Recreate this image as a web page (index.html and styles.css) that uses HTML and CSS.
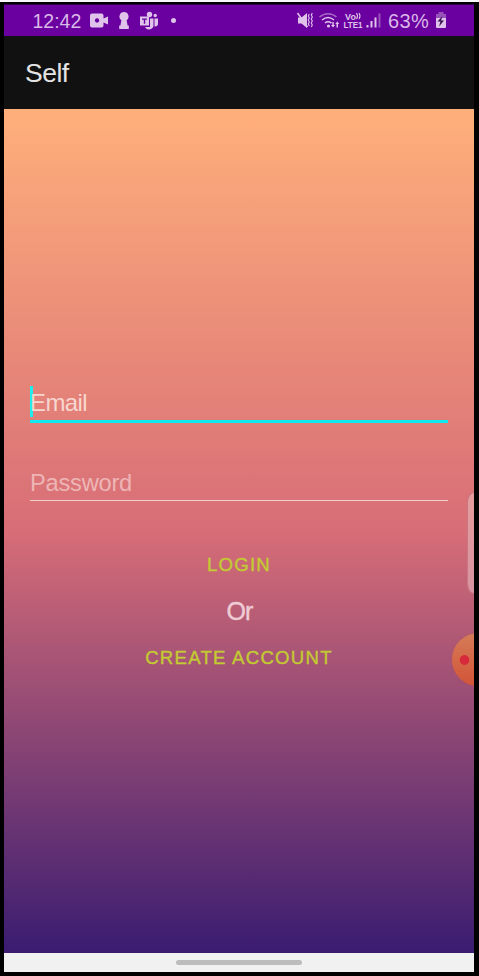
FILE: index.html
```html
<!DOCTYPE html>
<html lang="en">
<head>
<meta charset="utf-8">
<title>Self</title>
<link rel="stylesheet" href="styles.css">
</head>
<body>
<div class="device">
  <header class="status">
    <span class="time">12:42</span>
    <svg class="notifications" width="92" height="22" viewBox="88 9 92 22">
      <path fill-rule="evenodd" d="M92 13.500h9.500a2 2 0 0 1 2 2v3l4.500-2v8l-4.500-2v3a2 2 0 0 1-2 2H92a2 2 0 0 1-2-2v-10a2 2 0 0 1 2-2zM97 18.300a2.200 2.200 0 1 0 .1 0z"/>
      <path d="M124 12a4.500 4.500 0 0 1 2.600 8.200l1 5.300h1.200v3.500h-9.600v-3.500h1.200l1-5.300A4.500 4.500 0 0 1 124 12z"/>
      <circle cx="149.500" cy="14.500" r="2.700"/><circle cx="155.200" cy="15.500" r="1.700"/>
      <path d="M150 18.500h3.500v6a4.500 4.500 0 0 1-8.500 2.500h5zM154.500 18.500h3.500v6a3 3 0 0 1-3.500 2z"/>
      <path fill-rule="evenodd" d="M140 16.500h9v9h-9zM142 18.500v1.300h1.800v4h1.400v-4h1.800v-1.300z"/>
      <circle cx="173.500" cy="20.500" r="2.500"/>
    </svg>
    <svg class="signals" width="86" height="22" viewBox="296 9 86 22">
      <path d="M298 17.500h3.500l5.500-4.500v15l-5.500-4.500H298z"/>
      <path class="line" d="M297.500 13l10 14"/>
      <path class="line thin" d="M309.300 14l-1 2 1 2-1 2 1 2-1 2 1 2M312.300 13l-1 2 1 2-1 2 1 2-1 2 1 2-1 2"/>
      <path class="line dim" d="M319.500 17c5-4.500 12-4.500 17 0"/>
      <path class="line" d="M322 20c4-3.300 8-3.300 12 0M325 23c2-1.600 4-1.600 6.500 0"/>
      <circle cx="328.500" cy="26" r="1.600"/>
      <path d="M333 27.500l-2-2.500h1.300v-3h1.500v3h1.300zM337.300 21.500l2 2.500H338v3.500h-1.500V24h-1.300z"/>
      <text x="345" y="19.500" textLength="11">Vo</text>
      <path class="line thin" d="M356.500 13q2 3 0 6M359 13q2 3 0 6"/>
      <text x="343.500" y="28.300" textLength="19" lengthAdjust="spacingAndGlyphs">LTE1</text>
      <path d="M366.500 25h2v2.500h-2zM370.500 21h2v6.500h-2zM374.500 17.500h2v10h-2z"/>
      <path class="dim-fill" d="M378.500 13.500h2v14h-2z"/>
    </svg>
    <span class="percent">63%</span>
    <svg class="battery" width="12" height="18" viewBox="435 11 12 18">
      <path class="dim-fill" d="M438.500 12h5v2h2.500v4h-10v-4h2.500z"/>
      <path d="M436 18h10v9a1 1 0 0 1-1 1h-8a1 1 0 0 1-1-1z"/>
      <path class="bolt" d="M442.500 16l-5 5.500h3l-1.500 5 5-6h-3z"/>
    </svg>
  </header>
  <div class="appbar"><h1>Self</h1></div>
  <main class="screen">
    <label class="field focused"><span>Email</span></label>
    <label class="field"><span>Password</span></label>
    <button class="action login">LOGIN</button>
    <p class="or">Or</p>
    <button class="action">CREATE ACCOUNT</button>
    <div class="edge-handle"></div>
    <div class="recorder"></div>
  </main>
  <footer class="nav"><div class="pill"></div></footer>
</div>
</body>
</html>
```

FILE: styles.css
```css
* { box-sizing: border-box; }

body {
  margin: 0;
  height: 976px;
  overflow: hidden;
  background: #000;
  border-top: 2px solid #f8f8fa;
  font-family: "Liberation Sans", Arial, sans-serif;
}

.device {
  display: flex;
  flex-direction: column;
  width: 470px;
  height: 970px;
  margin: 2px 0 0 4px;
}

.status {
  display: flex;
  align-items: center;
  flex: none;
  height: 32px;
  padding-left: 28.5px;
  border-top: 1px solid #32004d;
  background: #6a009f;
  color: #d9b9e8;
}

.status svg { flex: none; fill: #dfc3eb; }
.time { width: 55.5px; padding-top: 1px; font-size: 19.5px; }
.notifications { margin-top: -1px; }
.signals { margin: -1px 0 0 116px; }
.percent { width: 46px; margin-left: 6px; padding-top: 1px; font-size: 20px; letter-spacing: 0.4px; }
.battery { margin: -1px 0 0 1px; }
.signals text { font-size: 9px; font-weight: bold; }
.signals .line { fill: none; stroke: #dfc3eb; stroke-width: 1.5; }
.signals .thin { stroke-width: 1.1; }
.signals .dim { stroke: #a668c4; }
.status .dim-fill { fill: #9853bb; }
.status .bolt { fill: #35104b; }

.appbar {
  display: flex;
  align-items: center;
  flex: none;
  height: 73px;
  padding: 2px 0 0 21px;
  background: #111;
}

.appbar h1 { margin: 0; color: #e4e4e4; font-size: 26.5px; font-weight: normal; letter-spacing: -0.5px; }

.screen {
  position: relative;
  display: flex;
  flex-direction: column;
  align-items: center;
  flex: none;
  height: 844px;
  padding-top: 277px;
  overflow: hidden;
  background: linear-gradient(#ffaf7b, #d76d77 50%, #3a1c71);
}

.field {
  width: 418px;
  height: 33px;
  margin-bottom: 45px;
  border-bottom: 1px solid #f0cfd0;
  color: #edb5b5;
  font-size: 23.7px;
  line-height: 30px;
  letter-spacing: -0.25px;
}

.field.focused {
  height: 37px;
  border-bottom: 3px solid #0eeaf0;
  color: #f7d6cf;
  font-size: 24px;
  line-height: 33px;
  letter-spacing: -0.6px;
}

.field.focused span {
  display: block;
  height: 31px;
  border-left: 3px solid #20edf0;
  text-indent: -3px;
}

.field + .field { margin-bottom: 51px; }

.action {
  padding: 0;
  border: 0;
  background: none;
  color: #c3ca32;
  font: 18.6px/26px "Liberation Sans", Arial, sans-serif;
  letter-spacing: 1.25px;
  -webkit-text-stroke: 0.4px #c3ca32;
}

.or {
  margin: 18px 0 19px 1px;
  color: #efccd5;
  font-size: 25px;
  line-height: 30px;
  letter-spacing: -0.9px;
  -webkit-text-stroke: 0.4px #efccd5;
}

.edge-handle {
  position: absolute;
  top: 383px;
  right: -7px;
  width: 14px;
  height: 102px;
  border: 1px solid #c77880;
  border-radius: 8px / 12px;
  background: linear-gradient(#e59c9c, #d893a2);
}

.recorder {
  position: absolute;
  top: 524px;
  right: -31px;
  width: 53px;
  height: 53px;
  border-radius: 50%;
  background: radial-gradient(circle at 12.5px 27px, #d72b3b 4.5px, transparent 5.2px), linear-gradient(#d57c58, #d35437);
  box-shadow: 0 0 2px #b85b58;
}

.nav {
  display: flex;
  justify-content: center;
  flex: none;
  height: 19px;
  padding-top: 7px;
  background: #f1f1f1;
}

.pill { width: 126px; height: 5px; border-radius: 3px; background: #bdbdbd; }
```
